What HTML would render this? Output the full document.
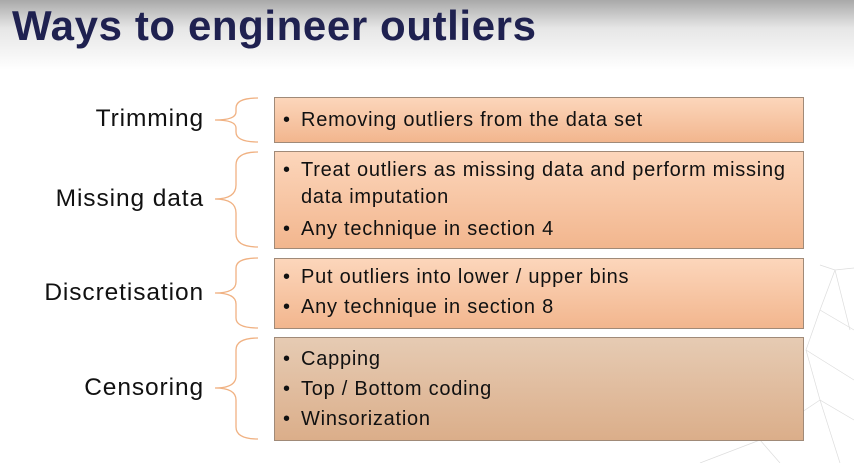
<!DOCTYPE html>
<html><head><style>
body{margin:0;width:854px;height:463px;overflow:hidden;background:#fff;font-family:"Liberation Sans",sans-serif;position:relative}
.hdr{position:absolute;left:0;top:0;width:854px;height:70px;background:linear-gradient(#a9a9a9,#e6e6e6 40%,#fff)}
h1{position:absolute;left:12px;top:2px;margin:0;font-size:42px;font-weight:bold;color:#1f2150;letter-spacing:0.6px}
.box{position:absolute;left:274px;width:530px;border:1px solid #a08a78;box-sizing:border-box;font-size:20px;letter-spacing:0.75px;color:#111;padding:6px 0 0 8px;line-height:30px}
.b1{background:linear-gradient(#fcd6bb,#f2b68e)}
.b4{background:linear-gradient(#e6cbb3,#dbae8a)}
.box div{padding-left:18px;text-indent:-18px}
.box div:before{content:"•";display:inline-block;width:18px;text-indent:0}
.lab{position:absolute;right:650px;font-size:24.5px;letter-spacing:0.9px;color:#111}
svg{position:absolute;left:0;top:0}
</style></head><body>
<div class="hdr"></div>
<h1>Ways to engineer outliers</h1>
<svg width="854" height="463">
<g fill="none" stroke="#f0b182" stroke-width="1.3">
<path d="M258 98 Q236 98 236 108 L236 112 Q236 120 215 120 Q236 120 236 128 L236 132 Q236 142 258 142"/>
<path d="M258 152 Q236 152 236 165 L236 185 Q236 199 215 199 Q236 199 236 213 L236 234 Q236 247 258 247"/>
<path d="M258 258 Q236 258 236 268 L236 282 Q236 293 215 293 Q236 293 236 304 L236 318 Q236 328 258 328"/>
<path d="M258 338 Q236 338 236 350 L236 376 Q236 388 215 388 Q236 388 236 400 L236 427 Q236 439 258 439"/>
</g>
<g stroke="#ddd" stroke-width="0.7" fill="none">
<path d="M820 265 L835 270 L854 268 M835 270 L820 310 L854 330 M820 310 L806 350 L854 380 M806 350 L820 400 L854 420 M820 400 L760 440 L700 463 M820 400 L840 463 M760 440 L780 463 M835 270 L850 330"/>
</g>
</svg>
<div class="lab" style="top:105px">Trimming</div>
<div class="lab" style="top:185px">Missing data</div>
<div class="lab" style="top:279px">Discretisation</div>
<div class="lab" style="top:374px">Censoring</div>
<div class="box b1" style="top:97px;height:46px;padding-top:7px"><div>Removing outliers from the data set</div></div>
<div class="box b1" style="top:151px;height:98px;padding-top:5px"><div style="line-height:27px">Treat outliers as missing data and perform missing data imputation</div><div style="margin-top:3px">Any technique in section 4</div></div>
<div class="box b1" style="top:258px;height:71px;padding-top:3px"><div>Put outliers into lower / upper bins</div><div>Any technique in section 8</div></div>
<div class="box b4" style="top:337px;height:104px;padding-top:6px"><div>Capping</div><div>Top / Bottom coding</div><div>Winsorization</div></div>
</body></html>
